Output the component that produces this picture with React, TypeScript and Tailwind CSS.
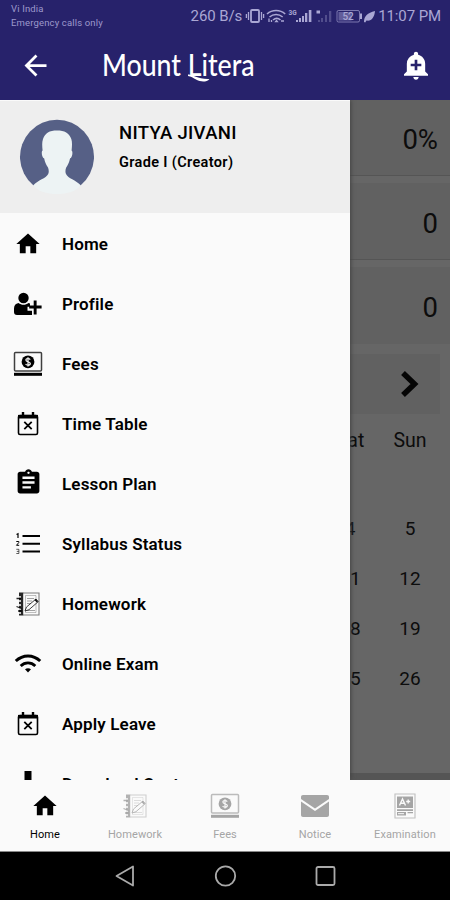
import type { ReactNode } from "react";
import { MdAddAlert, MdArrowBack, MdAssignment, MdHome } from "react-icons/md";

function ProfileIcon() {
  return (
    <svg width="30" height="24" viewBox="0 0 30 24" fill="currentColor">
      <circle cx="10.500" cy="6" r="5.200" />
      <path d="M1 20v-3.500c0-3 1.500-5 4.500-5.500 1.500 1.200 3.200 1.800 5 1.800s3.500-.600 5-1.800l1.500.6v3.200h-2.500v4h4.500V23H4c-2 0-3-1-3-3z" />
      <path d="M20.700 8.500h2.900v5h5v2.900h-5v6h-2.900v-6h-4.500v-2.900h4.500z" />
    </svg>
  );
}

function FeesIcon() {
  return (
    <svg width="30" height="26" viewBox="0 0 30 26">
      <rect x="1.500" y="1.500" width="27" height="18.500" rx="1" fill="none" stroke="currentColor" strokeWidth="1.500" opacity=".75" />
      <circle cx="15" cy="10.800" r="6.400" fill="currentColor" />
      <path d="M17.200 8.600c-.500-.800-1.200-1.100-2.200-1.100-1.300 0-2.100.600-2.100 1.500 0 2.300 4.400 1.200 4.400 3.500 0 1-.900 1.700-2.300 1.700-1.100 0-1.900-.400-2.400-1.200M15 6.200v9.400" fill="none" stroke="#fafafa" strokeWidth="1.200" />
      <path d="M1 21.800h28v3H1z" fill="currentColor" />
    </svg>
  );
}

function CalendarIcon() {
  return (
    <svg width="24" height="26" viewBox="0 0 24 26" fill="none" stroke="currentColor">
      <rect x="2.500" y="4.500" width="19" height="19" rx="1.500" strokeWidth="1.600" />
      <path d="M2 5.700h20" strokeWidth="3.600" />
      <path d="M7 1v4M17 1v4" strokeWidth="2.400" />
      <path d="M8.300 10.800l7.400 7.400M15.700 10.800l-7.400 7.400" strokeWidth="1.800" />
    </svg>
  );
}

function ListIcon() {
  return (
    <svg width="26" height="24" viewBox="0 0 26 24" fill="none" stroke="currentColor">
      <path d="M7.500 4h17.500M7.500 11.800h17.500M7.500 19.500h17.500" strokeWidth="2" />
      <path d="M1.500 2.500L3 1.800V6" strokeWidth="1.200" />
      <path d="M1.300 9.500h2.500v1l-2.300 2.800h2.700" strokeWidth="1" />
      <path d="M1.300 17.300h2.600v4.200H1.300M1.800 19.400h2" strokeWidth=".9" opacity=".7" />
    </svg>
  );
}

function HomeworkIcon() {
  return (
    <svg width="26" height="26" viewBox="0 0 26 26" fill="none" stroke="currentColor">
      <path d="M4 1.500h4.200v23H4z" fill="currentColor" stroke="none" opacity=".85" />
      <path d="M8 2h16v22H8" strokeWidth="1.100" opacity=".5" />
      <path d="M10.500 4.500h10.500v17H10.500z" strokeWidth=".8" opacity=".3" />
      <path d="M12 7.500h7M12 10h5M12 12.500h4M12 19.500h8" strokeWidth=".9" opacity=".4" />
      <path d="M1 6h5M1 10h5M1 14h5M1 18h5M1 22h5" stroke="#fafafa" strokeWidth="1.500" />
      <path d="M1.500 7.500h4.500M1.500 15.500l5 2M3 20h4" strokeWidth="1.300" opacity=".85" />
      <path d="M10 20l1.500-4 9.500-8 2.300 2.600-9.300 8.100z" fill="#fafafa" strokeWidth="1" opacity=".75" />
      <path d="M20 8.500l2.400 2.500" strokeWidth="1.500" />
    </svg>
  );
}

function WifiIcon() {
  return (
    <svg width="28" height="22" viewBox="0 0 28 22" fill="none" stroke="currentColor">
      <path d="M1.800 8c7-6.800 17.400-6.800 24.400 0" strokeWidth="3" />
      <path d="M6.700 13c4.200-4.100 10.400-4.100 14.600 0" strokeWidth="2.800" />
      <path d="M11 16.300c1.800-1.400 4.200-1.400 6 0l-3 3.200z" fill="currentColor" stroke="none" />
    </svg>
  );
}

function DownloadIcon() {
  return (
    <svg width="24" height="26" viewBox="0 0 24 26" fill="currentColor">
      <path d="M8.500 0h7v11H21l-9 9-9-9h5.500zM3 22.500h18V25H3z" />
    </svg>
  );
}

function MailIcon() {
  return (
    <svg width="30" height="24" viewBox="0 0 30 24" fill="currentColor">
      <path d="M3 1h24c1.200 0 2 .8 2 2v2L15 14.500 1 5V3c0-1.200.8-2 2-2z" />
      <path d="M1 7.500l14 9.500 14-9.500V21c0 1.200-.8 2-2 2H3c-1.200 0-2-.8-2-2z" />
    </svg>
  );
}

function ExamIcon() {
  return (
    <svg width="24" height="26" viewBox="0 0 24 26">
      <path d="M2 1h20v24H2z" fill="none" stroke="currentColor" strokeWidth="1.200" opacity=".65" />
      <path d="M4 3.500h16V15H4zM4 16.200h16v1.800H4zM4 19h9v3.500H4zM14.500 19H20v1.300h-5.500z" fill="currentColor" />
      <path d="M6.500 12.500l3-6.500 3 6.500M7.700 10.300h3.600M13.200 8.500h4M15.200 6.500v4" fill="none" stroke="#fafafa" strokeWidth="1.400" />
      <path d="M5 20.700h6" stroke="#fafafa" strokeWidth="1" />
    </svg>
  );
}

function StatusIcons() {
  return (
    <svg width="130" height="20" viewBox="0 0 130 20" className="shrink-0" fill="none" stroke="currentColor">
      {/* vibrate */}
      <rect x="6" y="4" width="8" height="12" rx="1" strokeWidth="1.800" />
      <path d="M3.500 6v8M1.400 8v4M16.500 6v8M18.600 8v4" strokeWidth="1.300" />
      {/* wifi */}
      <path d="M22 8c5.200-4.700 13-4.700 18.200 0M24.500 11c3.900-3.300 9.300-3.300 13.200 0M28 14c2.200-1.900 5.300-1.900 7.500 0" strokeWidth="1.600" />
      <path d="M24 12.500v3.500M26.500 14v2M36 15h3" strokeWidth="1.300" />
      <path d="M31.500 13.500l2.200 2.700h-4.400z" fill="currentColor" stroke="none" />
      {/* signal */}
      <g fill="currentColor" stroke="none">
        <text x="43.500" y="8.500" fontSize="6.500" fontFamily="Roboto" fontWeight="700">3G</text>
        <path d="M51 14h2v2h-2zM54 12h2v4h-2zM57 10h2v6h-2zM60 7h2.300v9h-2.300zM63.800 4h2.600v12h-2.600z" />
        <path d="M71.500 4.500h3.500v3h-3.500z" />
        <path d="M73 14h2v2h-2zM76 12h2v4h-2zM80 9h2v7h-2zM84 5h2.300v11H84z" opacity=".32" />
      </g>
      {/* battery */}
      <rect x="92" y="4.500" width="22.500" height="11.500" rx="1.500" strokeWidth="1" opacity=".65" />
      <path d="M93.500 6h13v8.500h-13z" fill="currentColor" stroke="none" opacity=".45" />
      <text x="97.500" y="14" fontSize="10" fontFamily="Roboto" fontWeight="500" fill="currentColor" stroke="none">52</text>
      <path d="M116 7.500v5.500" strokeWidth="2" />
      <path d="M119 16c0-6 3.500-9 11-11-.5 6.500-3.800 10.500-8.500 9.500l-1.300 2z" fill="currentColor" stroke="none" />
    </svg>
  );
}

function Avatar() {
  return (
    <svg width="76" height="76" viewBox="0 0 76 76" className="shrink-0">
      <path d="M14.300 66.200A37 37 0 1 1 61.700 66.200z" fill="#566086" />
      <path d="M14.300 66.200C19 61 27 59.500 29.200 55c.9-2 .6-4.500-.2-6.500-1.800-2.800-3.200-5.500-3.800-9-1.700-1-2.500-3.500-2.400-6 0-1 .4-1.700.8-2-.4-4-.8-8 .4-11.500 2-6 6.500-8.500 14-8.500s12.300 2.500 14.300 8.500c1.100 3.500.7 7.500.3 11.500.5.300.8 1 .8 2 .1 2.500-.7 5-2.400 6-.6 3.500-2 6.200-3.800 9-.8 2-1.100 4.500-.2 6.500C49 59.500 57 61 61.700 66.200 54 78 22 78 14.300 66.200z" fill="#edf3f4" />
    </svg>
  );
}

const menu: { label: string; icon: ReactNode }[] = [
  { label: "Home", icon: <MdHome size={28} /> },
  { label: "Profile", icon: <ProfileIcon /> },
  { label: "Fees", icon: <FeesIcon /> },
  { label: "Time Table", icon: <CalendarIcon /> },
  { label: "Lesson Plan", icon: <MdAssignment size={29} className="-mt-1" /> },
  { label: "Syllabus Status", icon: <ListIcon /> },
  { label: "Homework", icon: <HomeworkIcon /> },
  { label: "Online Exam", icon: <WifiIcon /> },
  { label: "Apply Leave", icon: <CalendarIcon /> },
  { label: "Download Center", icon: <DownloadIcon /> },
];

const tabs: { label: string; icon: ReactNode }[] = [
  { label: "Home", icon: <MdHome size={28} /> },
  { label: "Homework", icon: <HomeworkIcon /> },
  { label: "Fees", icon: <FeesIcon /> },
  { label: "Notice", icon: <MailIcon /> },
  { label: "Examination", icon: <ExamIcon /> },
];

const weekend = [
  ["4", "5"],
  ["11", "12"],
  ["18", "19"],
  ["25", "26"],
];

function Header() {
  return (
    <header className="h-[100px] shrink-0 bg-[#27226b] text-white">
      <div className="flex h-8 items-start justify-between pl-[11px] pr-[9px] text-[#aaa7d4]">
        <div className="pt-[2px] text-[9.5px] leading-[14px] tracking-[0.15px] text-[#9d99cc]">
          <div>Vi India</div>
          <div>Emergency calls only</div>
        </div>
        <div className="flex items-center pt-[6px] text-[15px] leading-5 tracking-[-0.1px]">
          <span className="mr-[3px] whitespace-nowrap">260 B/s</span>
          <StatusIcons />
          <span className="ml-[3px] whitespace-nowrap">11:07 PM</span>
        </div>
      </div>
      <div className="flex h-[68px] items-center pb-[2px] pl-[19px] pr-[18px]">
        <MdArrowBack size={33} className="shrink-0" />
        <div className="relative ml-[50px] flex-1">
          <h1 className="-mt-[3px] origin-left scale-x-[0.89] whitespace-nowrap font-[Lato] text-[30px] font-medium leading-9">Mount Litera</h1>
          <svg width="28" height="12" viewBox="0 0 28 12" className="absolute left-[85px] top-[22px]">
            <path d="M1 3.500c5-.5 9 5 21.500 4.500-3 3.500-9 3-13 .8C6 6.800 4 5.500 1 5z" fill="#fff" />
          </svg>
        </div>
        <MdAddAlert size={32} className="shrink-0" />
      </div>
    </header>
  );
}

function Dashboard() {
  return (
    <div className="h-full bg-[#666] text-right text-[#0c0c0c]">
      <div className="h-[76px] border-b border-[#555] bg-[#616161] pr-3 pt-[22px] text-[27.5px] leading-9">0%</div>
      <div className="mt-[7px] h-[77px] border-b border-[#555] bg-[#616161] pr-3 pt-[23px] text-[27.5px] leading-9">0</div>
      <div className="mt-[7px] h-[77px] bg-[#616161] pr-3 pt-[23px] text-[27.5px] leading-9">0</div>
      <div className="mr-[10px] mt-[10px] flex h-[60px] items-center justify-end bg-[#616161] pr-[20px]">
        <svg width="20" height="28" viewBox="0 0 20 28" fill="none" stroke="#050505" strokeWidth="5.500">
          <path d="M3 3l11.500 11L3 25" />
        </svg>
      </div>
      <div className="flex justify-end pr-[10px] pt-[14px] text-center text-[19.5px] leading-[26px]">
        <span className="w-[60px]">Sat</span>
        <span className="w-[60px]">Sun</span>
      </div>
      <div className="pt-[50px] text-[19px]">
        {weekend.map(([sat, sun]) => (
          <div key={sun} className="flex h-[50px] items-center justify-end pr-[10px] text-center">
            <span className="w-[60px]">{sat}</span>
            <span className="w-[60px]">{sun}</span>
          </div>
        ))}
      </div>
      <div className="mt-[69px] h-2 bg-[#555]" />
    </div>
  );
}

function Drawer() {
  return (
    <aside className="absolute inset-y-0 left-0 w-[350px] overflow-hidden bg-[#fafafa] text-black shadow-[1px_0_4px_#444]">
      <div className="flex h-[114px] border-b border-t border-[#fafafa] bg-[#eeeeee] pl-[19px] pt-[18px]">
        <Avatar />
        <div className="ml-6 pt-[2px] font-medium">
          <div className="text-[18.5px] leading-6 tracking-[0.3px]">NITYA JIVANI</div>
          <div className="mt-[8px] text-[14.5px] font-semibold leading-5 tracking-[0.35px]">Grade I (Creator)</div>
        </div>
      </div>
      <nav>
        {menu.map((item) => (
          <div key={item.label} className="flex h-[60px] items-center">
            <div className="flex w-[56px] justify-center">{item.icon}</div>
            <span className="ml-[6px] pt-[2px] text-[17px] font-semibold tracking-[0.15px]">{item.label}</span>
          </div>
        ))}
      </nav>
    </aside>
  );
}

export default function App() {
  return (
    <div className="flex h-[900px] w-[450px] flex-col overflow-hidden bg-[#fafafa] font-[Roboto,sans-serif]">
      <Header />
      <main className="relative h-[680px] shrink-0 overflow-hidden">
        <Dashboard />
        <Drawer />
      </main>
      <nav className="grid h-[71px] shrink-0 grid-cols-5 bg-[#fafafa]">
        {tabs.map((tab, i) => (
          <div key={tab.label} className={i === 0 ? "flex flex-col items-center text-black" : "flex flex-col items-center text-[#a5a5a5]"}>
            <div className="flex h-[51px] items-center">{tab.icon}</div>
            <span className="-mt-1 text-[11px] leading-4 tracking-[0.1px]">{tab.label}</span>
          </div>
        ))}
      </nav>
      <footer className="flex flex-1 items-center justify-center gap-[76px] border-t border-[#888] bg-black">
        <svg width="24" height="24" viewBox="0 0 24 24" fill="none" stroke="#aaa" strokeWidth="1.800">
          <path d="M20 2.500v19L3.500 12z" strokeLinejoin="round" />
        </svg>
        <svg width="24" height="24" viewBox="0 0 24 24" fill="none" stroke="#aaa" strokeWidth="1.800">
          <circle cx="12.500" cy="12" r="9.700" />
        </svg>
        <svg width="24" height="24" viewBox="0 0 24 24" fill="none" stroke="#aaa" strokeWidth="1.800">
          <rect x="3.500" y="3" width="18" height="18" rx="1.500" />
        </svg>
      </footer>
    </div>
  );
}
